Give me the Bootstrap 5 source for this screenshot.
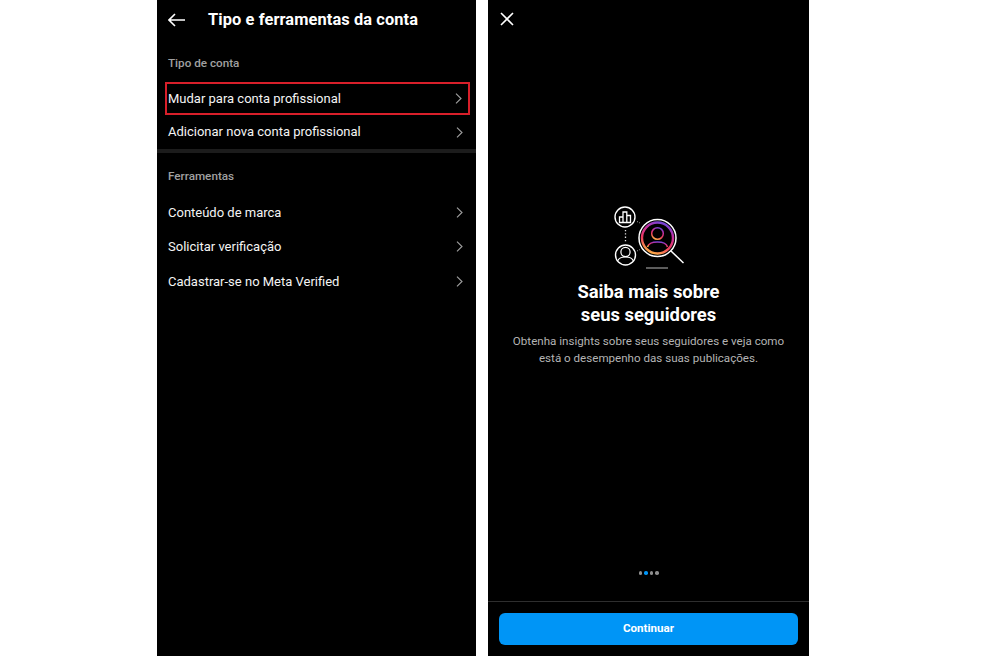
<!DOCTYPE html>
<html lang="pt-BR">
<head>
  <meta charset="UTF-8">
  <title>Tipo e ferramentas da conta</title>
  <link href="https://cdn.jsdelivr.net/npm/bootstrap@5.3.0/dist/css/bootstrap.min.css" rel="stylesheet">
  <style>
    html, body { height: 656px; overflow: hidden; background: #fff; }
    body { font-family: Roboto, "Liberation Sans", sans-serif; }
    .stage { height: 656px; padding-left: 157px; gap: 12px; }
    .phone-l { width: 319px; height: 656px; background: #000; color: #fff; }
    .phone-r { width: 321px; height: 656px; background: #000; color: #fff; }
    .top-bar { height: 40px; padding-left: 11px; }
    .top-bar h1 { font-size: 16.4px; font-weight: 700; margin: 0 0 0 23px; letter-spacing: .1px; }
    .sec-label { font-size: 11.7px; font-weight: 500; color: #a0a0a0; height: 17px; line-height: 17px; padding-left: 11px; }
    .row-item { height: 34.4px; padding: 0 13px 0 11px; font-size: 13px; color: #f4f4f4; }
    .row-hl { height: 33px; margin: 0 6px 0 8px; padding: 0 6px 0 1px; border: 2px solid #d81f2a; }
    .sep-bar { height: 4px; background: #1c1c1c; }
    .x-btn { padding: 11px 0 0 11px; height: 40px; }
    .hero { margin-top: 165px; }
    .hero h2 { font-size: 18.4px; line-height: 23px; font-weight: 700; margin: 9px 0 0; }
    .hero p { font-size: 11.6px; line-height: 17px; color: #b4b4b4; margin: 7px 0 0; }
    .dots { gap: 2px; height: 4px; margin-top: 204px; }
    .dot { width: 3.5px; height: 3.5px; border-radius: 50%; background: #8e8e8e; }
    .dot-on { background: #0095f6; }
    .foot { margin-top: 25.5px; border-top: 1px solid #2e2e2e; padding: 11px 11px 0; }
    .btn-go { background: #0095f6; color: #fff; font-size: 11.6px; font-weight: 700; height: 32px; border: 0; border-radius: 6px; padding: 1px 0 0; }
    .btn-go:hover { background: #0095f6; color: #fff; }
  </style>
</head>
<body class="m-0">
  <div class="stage d-flex">

    <!-- Left screen -->
    <div class="phone-l">
      <div class="top-bar d-flex align-items-center">
        <svg width="17" height="14" viewBox="0 0 17 14" fill="none" stroke="#fff" stroke-width="1.6"><path d="M17 7H1M7 1 1 7l6 6"/></svg>
        <h1>Tipo e ferramentas da conta</h1>
      </div>
      <div class="sec-label" style="margin-top:15px">Tipo de conta</div>
      <div class="row-item row-hl d-flex align-items-center justify-content-between" style="margin-top:10px">
        <span>Mudar para conta profissional</span>
        <svg width="7" height="11" viewBox="0 0 7 11" fill="none" stroke="#a0a0a0" stroke-width="1.1"><path d="m1 .7 5 4.8-5 4.8"/></svg>
      </div>
      <div class="row-item d-flex align-items-center justify-content-between">
        <span>Adicionar nova conta profissional</span>
        <svg width="7" height="11" viewBox="0 0 7 11" fill="none" stroke="#a0a0a0" stroke-width="1.1"><path d="m1 .7 5 4.8-5 4.8"/></svg>
      </div>
      <div class="sep-bar"></div>
      <div class="sec-label" style="margin-top:15px">Ferramentas</div>
      <div class="row-item d-flex align-items-center justify-content-between" style="margin-top:10px">
        <span>Conteúdo de marca</span>
        <svg width="7" height="11" viewBox="0 0 7 11" fill="none" stroke="#a0a0a0" stroke-width="1.1"><path d="m1 .7 5 4.8-5 4.8"/></svg>
      </div>
      <div class="row-item d-flex align-items-center justify-content-between">
        <span>Solicitar verificação</span>
        <svg width="7" height="11" viewBox="0 0 7 11" fill="none" stroke="#a0a0a0" stroke-width="1.1"><path d="m1 .7 5 4.8-5 4.8"/></svg>
      </div>
      <div class="row-item d-flex align-items-center justify-content-between">
        <span>Cadastrar-se no Meta Verified</span>
        <svg width="7" height="11" viewBox="0 0 7 11" fill="none" stroke="#a0a0a0" stroke-width="1.1"><path d="m1 .7 5 4.8-5 4.8"/></svg>
      </div>
    </div>

    <!-- Right screen -->
    <div class="phone-r d-flex flex-column">
      <div class="x-btn">
        <svg class="d-block" width="16" height="16" viewBox="0 0 16 16" fill="none" stroke="#fff" stroke-width="1.6"><path d="m2 2 12 12M14 2 2 14"/></svg>
      </div>
      <div class="hero text-center">
        <svg class="d-block mx-auto" width="72" height="66" viewBox="0 0 72 66" fill="none">
          <defs>
            <linearGradient id="ig" x1=".3" y1="1" x2=".7" y2="0">
              <stop offset="0" stop-color="#fdb045"/>
              <stop offset=".35" stop-color="#ee3a5f"/>
              <stop offset=".7" stop-color="#c22fa0"/>
              <stop offset="1" stop-color="#6f45d8"/>
            </linearGradient>
          </defs>
          <circle cx="12" cy="12" r="10" stroke="#fff" stroke-width="1.400"/>
          <path d="M6.500 17.500V12h3.500V7h3.800v3.500h3.700v7zM10 12v5.500M13.800 10.500v7" stroke="#fff" stroke-width="1.300"/>
          <path d="M12.500 25v13" stroke="#e0e0e0" stroke-width="1.300" stroke-dasharray="1.300 2"/>
          <path d="M24 16.500l3 1.500M24 46l3-1.500" stroke="#aaa" stroke-width="1" stroke-dasharray="1 1.500"/>
          <circle cx="12.500" cy="50" r="10" stroke="#fff" stroke-width="1.400"/>
          <circle cx="12.500" cy="47" r="4.600" stroke="#fff" stroke-width="1.200"/>
          <path d="M5 55.500c1-3 3.500-3.500 7.500-3.500s6.500.5 7.500 3.500" stroke="#fff" stroke-width="1.200"/>
          <circle cx="44.500" cy="33" r="18.500" stroke="#fff" stroke-width="1.500"/>
          <circle cx="44.500" cy="33" r="15.500" stroke="url(#ig)" stroke-width="2.400"/>
          <circle cx="44.500" cy="28.500" r="5.800" stroke="url(#ig)" stroke-width="1.500"/>
          <path d="M34.500 42c1-4 4.500-5 10-5s9 1 10 5" stroke="url(#ig)" stroke-width="1.500"/>
          <path d="m58 46 12.500 12" stroke="#fff" stroke-width="1.500"/>
          <path d="M33 63h22" stroke="#8e8e8e" stroke-width="1.300"/>
        </svg>
        <h2>Saiba mais sobre<br>seus seguidores</h2>
        <p>Obtenha insights sobre seus seguidores e veja como<br>está o desempenho das suas publicações.</p>
      </div>
      <div class="dots d-flex justify-content-center">
        <span class="dot"></span><span class="dot dot-on"></span><span class="dot"></span><span class="dot"></span>
      </div>
      <div class="foot">
        <button class="btn btn-go w-100" type="button">Continuar</button>
      </div>
    </div>

  </div>
  <script src="https://cdn.jsdelivr.net/npm/bootstrap@5.3.0/dist/js/bootstrap.bundle.min.js"></script>
</body>
</html>
